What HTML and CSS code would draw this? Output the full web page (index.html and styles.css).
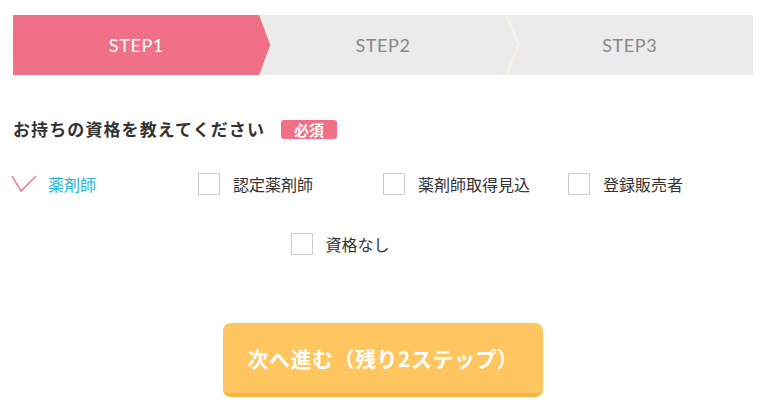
FILE: index.html
```html
<!DOCTYPE html>
<html lang="ja">
<head>
    <meta charset="UTF-8">
    <meta name="viewport" content="width=device-width, initial-scale=1.0">
    <title>資格登録 STEP1</title>
    <link rel="stylesheet" href="styles.css">
</head>
<body>
    <div class="container">
        <div class="steps">
            <div class="step active">STEP1
                <svg class="chevron" width="16" height="60" viewBox="0 0 16 60">
                    <polygon points="0,0 1,0 12,30 1,60 0,60" fill="#f07088"/>
                    <polyline points="1,-1 12.5,30 1,61" fill="none" stroke="#fbf2e6" stroke-width="2.2"/>
                </svg>
            </div>
            <div class="step">STEP2
                <svg class="chevron" width="16" height="60" viewBox="0 0 16 60">
                    <polyline points="1,-1 14,30 1,61" fill="none" stroke="#fbf2e6" stroke-width="2.2"/>
                </svg>
            </div>
            <div class="step">STEP3</div>
        </div>

        <div class="question">
            <h2>お持ちの資格を教えてください</h2>
            <span class="badge">必須</span>
        </div>

        <div class="options">
            <label class="option checked">
                <svg class="check" width="26" height="20" viewBox="0 0 26 20">
                    <polyline points="1,2 10,17 25,2" fill="none" stroke="#f07088" stroke-width="1.4"/>
                </svg>
                <span>薬剤師</span>
            </label>
            <label class="option"><span class="box"></span><span>認定薬剤師</span></label>
            <label class="option"><span class="box"></span><span>薬剤師取得見込</span></label>
            <label class="option"><span class="box"></span><span>登録販売者</span></label>
            <label class="option"><span class="box"></span><span>資格なし</span></label>
        </div>

        <div class="actions">
            <button class="next">次へ進む（残り2ステップ）</button>
        </div>
    </div>
</body>
</html>
```
FILE: styles.css
```css
body { margin: 0; font-family: "Noto Sans CJK JP", "Noto Sans", sans-serif; color: #333; background: #fff; }
.container { padding: 15px 13px; }

.steps { display: flex; height: 60px; background: #ebebeb; }
.step { position: relative; flex: 1; display: flex; align-items: center; justify-content: center; font-family: Lato, "Noto Sans", sans-serif; font-size: 18px; color: #888; letter-spacing: 0.6px; }
.step.active { background: #f07088; color: #fff; }
.chevron { position: absolute; top: 0; left: 100%; margin-left: -1px; z-index: 1; }

.question { display: flex; align-items: center; margin-top: 43px; }
.question h2 { margin: 0; font-size: 17px; font-weight: bold; color: #333; line-height: 22px; letter-spacing: 1.1px; }
.badge { margin-left: 16px; background: #f07088; color: #fff; font-size: 15px; font-weight: bold; line-height: 19px; padding: 0 13px; border-radius: 3px; }

.options { display: flex; flex-wrap: wrap; justify-content: center; row-gap: 30px; margin-top: 29px; }
.option { width: 185px; height: 30px; display: flex; align-items: center; gap: 13px; font-size: 16px; color: #333; cursor: pointer; }
.box { width: 20px; height: 20px; border: 1px solid #ccc; background: #fff; flex-shrink: 0; }
.check { margin-left: -2px; margin-right: -2px; flex-shrink: 0; }
.option.checked span { color: #27b5d5; }

.actions { display: flex; justify-content: center; margin-top: 64px; }
.next { width: 320px; height: 74px; border: none; border-bottom: 4px solid #f8b440; border-radius: 8px; background: #ffc55f; color: #fff; font-family: "Noto Sans CJK JP", sans-serif; font-size: 21px; font-weight: bold; letter-spacing: 0.5px; cursor: pointer; }
.next:hover { background: #ffbd4a; }
```
